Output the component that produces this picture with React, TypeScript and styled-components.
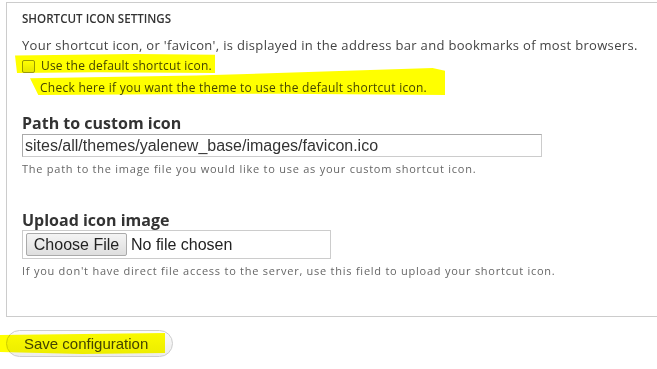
import styled, { createGlobalStyle } from 'styled-components';

const GlobalStyle = createGlobalStyle`
  html, body {
    margin: 0;
    padding: 0;
    background: #fff;
    overflow: hidden;
  }
  body {
    font-family: 'Open Sans', 'Liberation Sans', sans-serif;
    color: #444;
  }
`;

const Page = styled.div`
  width: 657px;
  height: 369px;
  overflow: hidden;
  padding-top: 2px;
  box-sizing: border-box;
`;

const Fieldset = styled.section`
  margin-left: 6px;
  width: 680px;
  height: 315px;
  box-sizing: border-box;
  border: 1px solid #ccc;
  padding: 8px 15px 0;
`;

const Legend = styled.h2`
  margin: 0;
  font-size: 11.6px;
  line-height: 16px;
  font-weight: 600;
  text-transform: uppercase;
  color: #333;
`;

const Description = styled.p`
  margin: 9px 0 0;
  font-size: 13px;
  line-height: 18px;
  letter-spacing: 0.32px;
  color: #444;
`;

const CheckRow = styled.label`
  display: flex;
  align-items: center;
  gap: 6px;
  margin-top: 3px;
  font-size: 12px;
  line-height: 18px;
  letter-spacing: 0.2px;
  color: #444;
`;

const Box = styled.span`
  width: 11px;
  height: 11px;
  border: 1px solid #999;
  border-radius: 2px;
  background: linear-gradient(#fff, #e6e6e6);
`;

const CheckHelp = styled.div`
  margin: 4px 0 0 18px;
  font-size: 12px;
  line-height: 18px;
  letter-spacing: 0.27px;
  color: #444;
`;

const Marker = styled.span<{ $clip: string }>`
  position: absolute;
  background: #ffff00;
  mix-blend-mode: multiply;
  pointer-events: none;
  clip-path: polygon(${({ $clip }) => $clip});
`;

const Field = styled.div<{ $top: number }>`
  margin-top: ${({ $top }) => $top}px;
`;

const FieldLabel = styled.label`
  display: block;
  font-size: 16px;
  line-height: 20px;
  font-weight: 700;
  color: #333;
`;

const TextInput = styled.input`
  display: block;
  width: 520px;
  height: 23px;
  box-sizing: border-box;
  margin-top: 1px;
  padding: 0 2px;
  border: 1px solid #aaa;
  border-bottom-color: #ccc;
  border-right-color: #ccc;
  font-family: 'Liberation Sans', Arial, sans-serif;
  font-size: 16px;
  color: #333;
  outline: none;
`;

const FileBox = styled.div`
  display: flex;
  align-items: center;
  width: 309px;
  height: 29px;
  box-sizing: border-box;
  padding-left: 3px;
  border: 1px solid #ccc;
  font-family: 'Liberation Sans', Arial, sans-serif;
  font-size: 16px;
  color: #222;
`;

const ChooseButton = styled.span`
  display: inline-flex;
  align-items: center;
  justify-content: center;
  width: 101px;
  height: 23px;
  box-sizing: border-box;
  border: 1px solid #aaa;
  border-radius: 2px;
  background: linear-gradient(#f4f4f4, #dedede);
  color: #222;
  margin-right: 4px;
`;

const Help = styled.div`
  margin-top: 4px;
  font-size: 11px;
  line-height: 16px;
  letter-spacing: 0.75px;
  color: #666;
`;

const Actions = styled.div`
  position: relative;
  padding: 13px 0 0 6px;
`;

const SaveButton = styled.button`
  width: 167px;
  height: 27px;
  box-sizing: border-box;
  border: 1px solid #ccc;
  border-radius: 14px;
  background: linear-gradient(#fbfbfb, #ececec);
  font-family: 'Liberation Sans', Arial, sans-serif;
  font-size: 15px;
  color: #444;
  text-align: left;
  padding: 0 0 0 17px;
`;

const Wrap = styled.div`
  position: relative;
`;

export default function App() {
  return (
    <Page>
      <GlobalStyle />
      <Fieldset>
        <Legend>Shortcut icon settings</Legend>
        <Wrap>
          <Description>
            Your shortcut icon, or 'favicon', is displayed in the address bar and bookmarks of most browsers.
          </Description>
          <CheckRow>
            <Box />
            Use the default shortcut icon.
          </CheckRow>
          <CheckHelp>Check here if you want the theme to use the default shortcut icon.</CheckHelp>
          <Marker
            $clip="0% 8%, 60% 0%, 100% 4%, 100% 100%, 40% 96%, 1% 100%"
            style={{ left: -7, top: 18, width: 200, height: 19 }}
          />
          <Marker
            $clip="0% 38%, 40% 28%, 97% 0%, 100% 10%, 100% 100%, 60% 95%, 2% 100%"
            style={{ left: 8, top: 32, width: 415, height: 27 }}
          />
        </Wrap>
        <Field $top={16}>
          <FieldLabel htmlFor="icon-path">Path to custom icon</FieldLabel>
          <TextInput id="icon-path" defaultValue="sites/all/themes/yalenew_base/images/favicon.ico" />
          <Help>The path to the image file you would like to use as your custom shortcut icon.</Help>
        </Field>
        <Field $top={33}>
          <FieldLabel>Upload icon image</FieldLabel>
          <FileBox>
            <ChooseButton>Choose File</ChooseButton>
            No file chosen
          </FileBox>
          <Help>If you don't have direct file access to the server, use this field to upload your shortcut icon.</Help>
        </Field>
      </Fieldset>
      <Actions>
        <SaveButton type="button">Save configuration</SaveButton>
        <Marker
          $clip="0% 10%, 50% 5%, 100% 0%, 100% 95%, 50% 100%, 0% 90%"
          style={{ left: 0, top: 16, width: 165, height: 21 }}
        />
      </Actions>
    </Page>
  );
}
